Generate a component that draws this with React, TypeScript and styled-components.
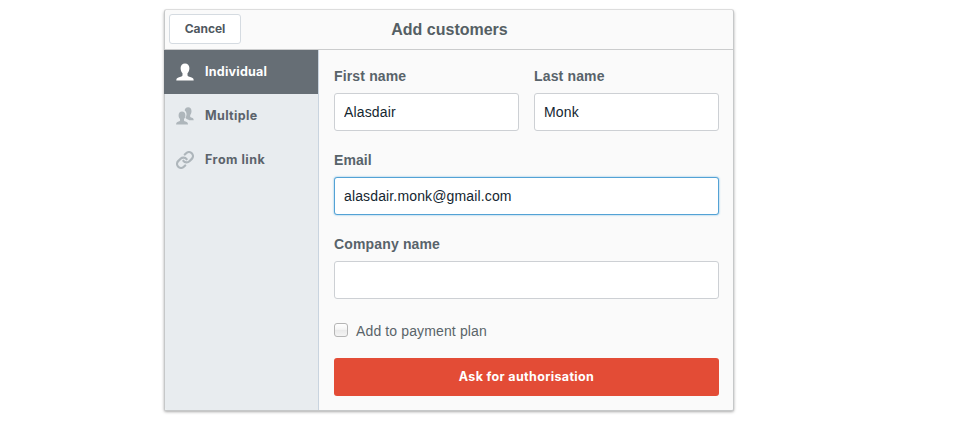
import React from "react";
import styled, { createGlobalStyle } from "styled-components";

const GlobalStyle = createGlobalStyle`
  * { box-sizing: border-box; }
  body { margin: 0; background: #fff; overflow: hidden; font-family: "Liberation Sans", Arial, sans-serif; }
`;

const rounded = `font-family: Inter, sans-serif; font-weight: 700;`;

const Page = styled.main`
  height: 425px;
  padding: 10px 0 0 164px;
`;

const Panel = styled.section`
  width: 570px;
  height: 401px;
  display: flex;
  flex-direction: column;
  background: #fafafa;
  border: 1px solid #c6c8c9;
  border-top: 0;
  border-radius: 2px;
  box-shadow: 0 -1px 0 rgba(0, 0, 0, 0.09), 0 1px 3px rgba(0, 0, 0, 0.34);
`;

const Header = styled.header`
  height: 40px;
  flex: none;
  display: grid;
  grid-template-columns: 72px 1fr 72px;
  align-items: center;
  padding: 0 4px;
  border-bottom: 1px solid #cbcccd;
`;

const CancelButton = styled.button`
  width: 72px;
  height: 30px;
  padding: 0 0 1px;
  margin-bottom: 1px;
  background: #fff;
  border: 1px solid #d5dbe1;
  border-radius: 3px;
  color: #4f5860;
  ${rounded}
  font-size: 12px;
  letter-spacing: -0.05px;
`;

const Title = styled.h1`
  margin: 0 0 0 1px;
  text-align: center;
  font-size: 16px;
  line-height: 20px;
  color: #555f64;
`;

const Content = styled.div`
  flex: 1;
  display: flex;
`;

const Sidebar = styled.nav`
  width: 154px;
  background: #e8ecef;
  border-right: 1px solid #c9d4df;
  border-radius: 0 0 0 2px;
`;

const NavItem = styled.a<{ $active?: boolean }>`
  height: 44px;
  display: flex;
  align-items: center;
  gap: 11px;
  margin-left: -1px;
  padding: 0 0 1px 12px;
  background: ${(p) => (p.$active ? "#666e75" : "transparent")};
  color: ${(p) => (p.$active ? "#fff" : "#5b636b")};
  ${rounded}
  font-size: 12.5px;
`;

const NavIcon = styled.svg<{ $active?: boolean }>`
  width: 18px;
  height: 18px;
  flex: none;
  color: ${(p) => (p.$active ? "#fff" : "#aeb6bb")};
`;

const NavText = styled.span<{ $spacing: number }>`
  padding-bottom: 1px;
  letter-spacing: ${(p) => p.$spacing}px;
`;

const Form = styled.form`
  flex: 1;
  padding: 16px 14px 0 15px;
`;

const Fields = styled.div`
  display: grid;
  grid-template-columns: 1fr 1fr;
  column-gap: 15px;
  row-gap: 16px;
`;

const Field = styled.label<{ $wide?: boolean }>`
  display: block;
  height: 68px;
  grid-column: ${(p) => (p.$wide ? "1 / -1" : "auto")};
`;

const FieldName = styled.span<{ $spacing: number }>`
  display: block;
  height: 27px;
  line-height: 21px;
  font-size: 14px;
  font-weight: 700;
  letter-spacing: ${(p) => p.$spacing}px;
  color: #58636a;
`;

const TextInput = styled.input<{ $focused?: boolean }>`
  display: block;
  width: 100%;
  height: 38px;
  padding: 0 9px;
  background: #fff;
  border: 1px solid ${(p) => (p.$focused ? "#53a2d5" : "#cdd0d4")};
  border-radius: 3px;
  box-shadow: ${(p) => (p.$focused ? "0 0 2px rgba(72, 160, 218, 0.8)" : "none")};
  outline: none;
  font: 14px "Liberation Sans", Arial, sans-serif;
  letter-spacing: 0.14px;
  color: #142630;
`;

const PlanOption = styled.label`
  display: flex;
  align-items: center;
  gap: 8px;
  height: 20px;
  margin-top: 19px;
  font-size: 14px;
  letter-spacing: 0.13px;
  color: #596469;
`;

const Checkbox = styled.input`
  appearance: none;
  width: 14px;
  height: 14px;
  margin: 0 0 2px;
  border: 1px solid #b5b5b5;
  border-radius: 3px;
  background: linear-gradient(#fff, #f5f5f5 45%, #e9e9e9 50%, #f4f4f4);
`;

const SubmitButton = styled.button`
  display: block;
  width: 100%;
  height: 38px;
  margin-top: 17px;
  padding: 0 0 2px;
  border: 0;
  border-radius: 3px;
  background: #e34c36;
  color: #fff;
  ${rounded}
  font-size: 12.5px;
  letter-spacing: 0.35px;
`;

const PERSON =
  "M9 .6C6.4.6 4.6 2.4 4.6 5.1c0 2.3.7 4 1.9 5.1v2.1c0 .6-.4.9-1.1 1.2l-3 1.1C.9 15.1.4 15.9.3 17.5h17.4c-.1-1.6-.6-2.4-2.1-2.9l-3-1.1c-.7-.3-1.1-.6-1.1-1.2v-2.1c1.2-1.1 1.9-2.8 1.9-5.1C13.4 2.4 11.6.6 9 .6Z";

function PersonIcon() {
  return (
    <NavIcon $active viewBox="0 0 18 18" fill="currentColor">
      <path d={PERSON} />
    </NavIcon>
  );
}

function PeopleIcon() {
  return (
    <NavIcon viewBox="0 0 18 18" fill="currentColor">
      <path d="M12.2.3C9.9.3 8.8 1.7 8.7 3.5c1.3.9 2 2.4 1.8 4.3-.1 1.2-.4 2-1 2.9.3.9 1.2 1.3 2.5 1.8l1.2.7h4.5c-.1-1.6-.6-2.1-1.8-2.5l-1.2-.5c-.4-.2-.5-.4-.5-.8V8.1c.8-.8 1.3-2.3 1.3-4C15.5 1.7 14.3.3 12.2.3Z" />
      <path d="M6 4.4c-2.2 0-3.4 1.4-3.4 3.8 0 1.7.5 3 1.4 3.8v1.4c0 .4-.3.6-.7.8l-1.4.6C.6 15.3.2 16.1.1 17.6H12c-.1-1.5-.5-2.3-1.8-2.8l-1.5-.6c-.4-.2-.7-.4-.7-.8V12c.9-.8 1.4-2.1 1.4-3.8C9.4 5.8 8.2 4.4 6 4.4Z" />
    </NavIcon>
  );
}

function LinkIcon() {
  return (
    <NavIcon viewBox="0.7 0.7 22.6 22.6" fill="none" stroke="currentColor" strokeWidth="2.8" strokeLinecap="round">
      <path d="M10 13a5 5 0 0 0 7.54.54l3-3a5 5 0 0 0-7.07-7.07l-1.72 1.71" />
      <path d="M14 11a5 5 0 0 0-7.54-.54l-3 3a5 5 0 0 0 7.07 7.07l1.71-1.71" />
    </NavIcon>
  );
}

export default function App() {
  return (
    <>
      <GlobalStyle />
      <Page>
        <Panel>
          <Header>
            <CancelButton type="button">Cancel</CancelButton>
            <Title>Add customers</Title>
          </Header>
          <Content>
            <Sidebar>
              <NavItem $active><PersonIcon /><NavText $spacing={0.24}>Individual</NavText></NavItem>
              <NavItem><PeopleIcon /><NavText $spacing={0.35}>Multiple</NavText></NavItem>
              <NavItem><LinkIcon /><NavText $spacing={0.5}>From link</NavText></NavItem>
            </Sidebar>
            <Form>
              <Fields>
                <Field>
                  <FieldName $spacing={0.15}>First name</FieldName>
                  <TextInput defaultValue="Alasdair" />
                </Field>
                <Field>
                  <FieldName $spacing={0.15}>Last name</FieldName>
                  <TextInput defaultValue="Monk" />
                </Field>
                <Field $wide>
                  <FieldName $spacing={0.05}>Email</FieldName>
                  <TextInput $focused defaultValue="alasdair.monk@gmail.com" />
                </Field>
                <Field $wide>
                  <FieldName $spacing={0.15}>Company name</FieldName>
                  <TextInput />
                </Field>
              </Fields>
              <PlanOption><Checkbox type="checkbox" />Add to payment plan</PlanOption>
              <SubmitButton type="button">Ask for authorisation</SubmitButton>
            </Form>
          </Content>
        </Panel>
      </Page>
    </>
  );
}
